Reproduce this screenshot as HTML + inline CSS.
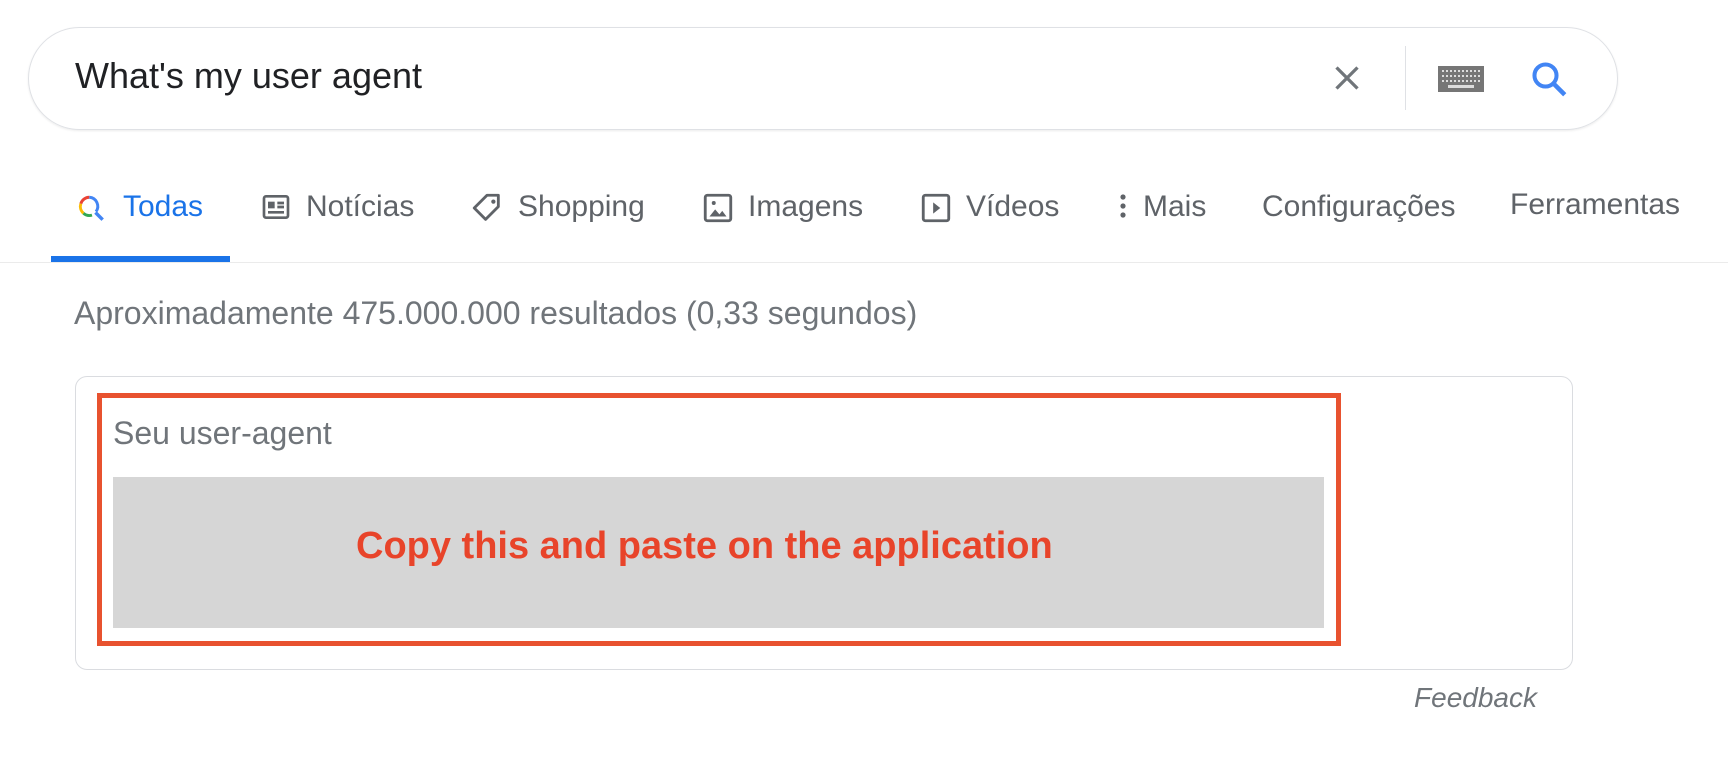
<!DOCTYPE html>
<html><head><meta charset="utf-8"><style>
body{margin:0;width:1728px;height:766px;background:#fff;font-family:"Liberation Sans",Arial,sans-serif;position:relative;overflow:hidden}
.a{position:absolute}
.tab{position:absolute;top:189px;font-size:30px;color:#5f6368;line-height:36px;white-space:nowrap}
.ic{position:absolute;top:191px}
</style></head><body>
<div class="a" style="left:28px;top:27px;width:1588px;height:101px;border:1px solid #dfe1e5;border-radius:52px;box-shadow:0 1px 2px rgba(0,0,0,.08)"></div>
<div class="a" style="left:75px;top:55px;font-size:36px;color:#202124;line-height:42px">What's my user agent</div>
<svg class="a" style="left:1329px;top:60px" width="36" height="36" viewBox="0 0 24 24"><path d="M5 5L19 19M19 5L5 19" stroke="#70757a" stroke-width="2.2"/></svg>
<div class="a" style="left:1405px;top:46px;width:1px;height:64px;background:#dfe1e5"></div>
<svg class="a" style="left:1438px;top:66px" width="46" height="26" viewBox="0 0 46 26"><rect width="46" height="26" fill="#767676"/><g fill="#fff" opacity=".75"><g id="r"><rect x="4" y="4" width="2" height="2"/><rect x="8" y="4" width="2" height="2"/><rect x="12" y="4" width="2" height="2"/><rect x="16" y="4" width="2" height="2"/><rect x="20" y="4" width="2" height="2"/><rect x="24" y="4" width="2" height="2"/><rect x="28" y="4" width="2" height="2"/><rect x="32" y="4" width="2" height="2"/><rect x="36" y="4" width="2" height="2"/><rect x="40" y="4" width="2" height="2"/></g><use href="#r" y="5"/><use href="#r" y="10"/><rect x="10" y="19" width="26" height="3"/></g></svg>
<svg class="a" style="left:1528px;top:58px" width="42" height="42" viewBox="0 0 24 24"><circle cx="10" cy="10" r="6.3" fill="none" stroke="#4285f4" stroke-width="2.3"/><path d="M14.6 14.6L21 21" stroke="#4285f4" stroke-width="2.6"/></svg>

<svg class="ic" style="left:76px;top:193px" width="32" height="32" viewBox="0 0 24 24"><path d="M10 3.2A6.8 6.8 0 0 0 3.6 8" stroke="#ea4335" stroke-width="2.2" fill="none"/><path d="M3.6 8A6.8 6.8 0 0 0 5.6 15.2" stroke="#fbbc05" stroke-width="2.2" fill="none"/><path d="M5.6 15.2A6.8 6.8 0 0 0 12 16.6" stroke="#34a853" stroke-width="2.2" fill="none"/><path d="M10 3.2A6.8 6.8 0 0 1 15 14" stroke="#4285f4" stroke-width="2.2" fill="none"/><path d="M14.6 14.6L20 20" stroke="#4285f4" stroke-width="2.6"/></svg>
<div class="tab" style="left:123px;color:#1a73e8">Todas</div>
<svg class="ic" style="left:260px" width="32" height="32" viewBox="0 0 24 24"><rect x="3" y="4" width="18" height="16" rx="1.5" fill="none" stroke="#5f6368" stroke-width="2"/><rect x="6" y="8" width="5" height="5" fill="#5f6368"/><path d="M13 9h5M13 12h5M6 16h12" stroke="#5f6368" stroke-width="2"/></svg>
<div class="tab" style="left:306px">Notícias</div>
<svg class="ic" style="left:470px" width="34" height="34" viewBox="0 0 24 24"><path d="M12 3h8v8L11 20 3 12z" fill="none" stroke="#5f6368" stroke-width="2" stroke-linejoin="round"/><circle cx="16.5" cy="7.5" r="1.5" fill="#5f6368"/></svg>
<div class="tab" style="left:518px">Shopping</div>
<svg class="ic" style="left:701px" width="34" height="34" viewBox="0 0 24 24"><rect x="3" y="3" width="18" height="18" rx="1.5" fill="none" stroke="#5f6368" stroke-width="2"/><path d="M6 18l4-5 3 3.5 2-2.5 3 4z" fill="#5f6368"/><circle cx="9" cy="8.5" r="1.4" fill="#5f6368"/></svg>
<div class="tab" style="left:748px">Imagens</div>
<svg class="ic" style="left:919px" width="34" height="34" viewBox="0 0 24 24"><rect x="3" y="3" width="18" height="18" rx="1.5" fill="none" stroke="#5f6368" stroke-width="2"/><path d="M10 8v8l5-4z" fill="#5f6368"/></svg>
<div class="tab" style="left:966px">Vídeos</div>
<svg class="ic" style="left:1116px" width="14" height="32" viewBox="0 0 14 32"><circle cx="7" cy="6" r="2.6" fill="#5f6368"/><circle cx="7" cy="15" r="2.6" fill="#5f6368"/><circle cx="7" cy="24" r="2.6" fill="#5f6368"/></svg>
<div class="tab" style="left:1143px">Mais</div>
<div class="tab" style="left:1262px">Configurações</div>
<div class="tab" style="left:1510px;top:187px">Ferramentas</div>
<div class="a" style="left:51px;top:256px;width:179px;height:6px;background:#1a73e8"></div>
<div class="a" style="left:0;top:262px;width:1728px;height:1px;background:#ebebeb"></div>

<div class="a" style="left:74px;top:295px;font-size:32px;color:#70757a;line-height:36px">Aproximadamente 475.000.000 resultados (0,33 segundos)</div>

<div class="a" style="left:75px;top:376px;width:1498px;height:294px;border:1px solid #dadce0;border-radius:12px;box-sizing:border-box"></div>
<div class="a" style="left:97px;top:393px;width:1244px;height:253px;border:5px solid #e8522f;box-sizing:border-box"></div>
<div class="a" style="left:113px;top:415px;font-size:32px;color:#70757a;line-height:36px">Seu user-agent</div>
<div class="a" style="left:113px;top:477px;width:1211px;height:151px;background:#d6d6d6"></div>
<div class="a" style="left:356px;top:524px;font-size:38px;font-weight:bold;color:#e8442a;line-height:44px;white-space:nowrap">Copy this and paste on the application</div>
<div class="a" style="left:1300px;width:237px;text-align:right;top:682px;font-size:28px;font-style:italic;color:#70757a;line-height:32px">Feedback</div>
</body></html>
